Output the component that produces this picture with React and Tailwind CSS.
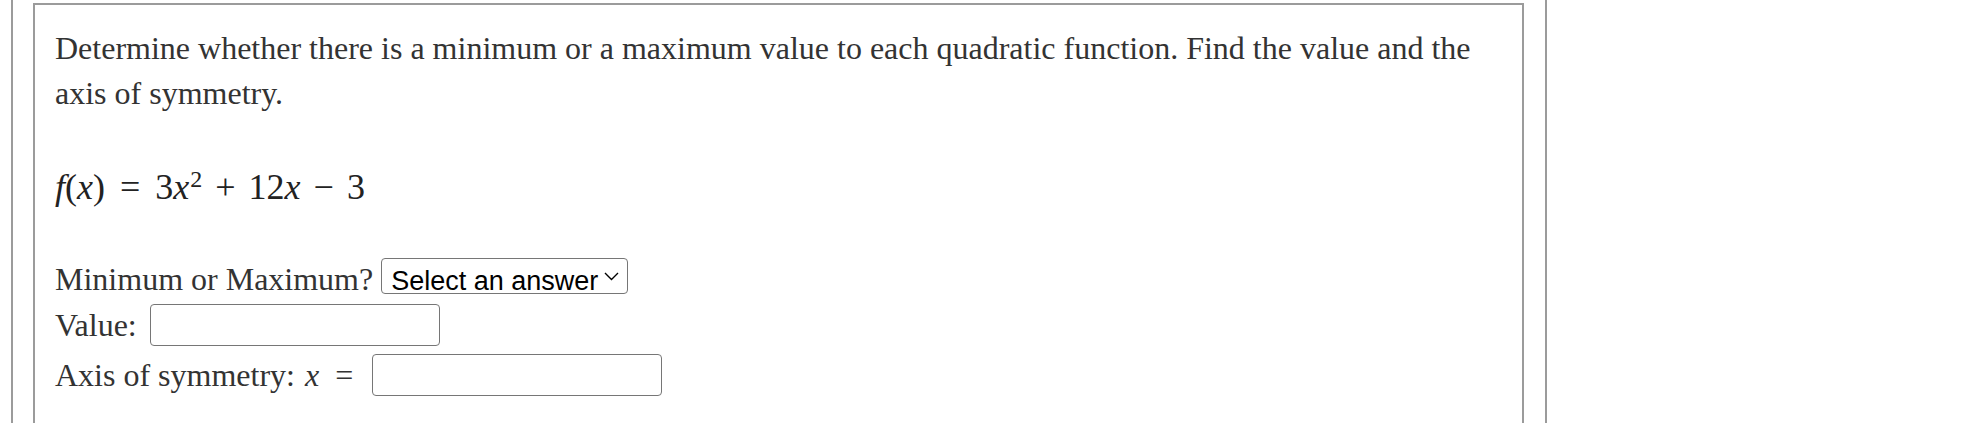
// Quadratic min/max question card, rendered like a homework player pane.

const serif = { fontFamily: '"Liberation Serif", "Times New Roman", serif' }

function MathX() {
  return <span className="italic">x</span>
}

export default function App() {
  return (
    <div className="h-[423px] overflow-hidden bg-white" style={serif}>
      <div className="ml-[11px] w-[1536px] h-full border-x-2 border-[#9b9b9b] pl-[20px] pr-[21px] pt-[3px]">
        <div className="h-[440px] border-2 border-b-0 border-[#9b9b9b] px-[20px] pt-[21px] text-[32px] leading-[45px] text-[#333]">
          <p>
            Determine whether there is a minimum or a maximum value to each quadratic function. Find the value and the
            axis of symmetry.
          </p>

          <p className="mt-[49px] text-[36px] whitespace-nowrap text-[#222]">
            <span className="italic">f</span>(<MathX />)
            <span className="mx-[15px]">=</span>3<MathX />
            <sup className="text-[24px] ml-[1px]">2</sup>
            <span className="mx-[13px]">+</span>12<MathX />
            <span className="mx-[13px]">−</span>3
          </p>

          <div className="mt-[51px] flex flex-col gap-[7px]">
            <div className="flex items-center h-[36px]">
              <span>Minimum or Maximum?</span>
              <div className="relative ml-[8px]">
                <select
                  className="appearance-none h-[36px] w-[247px] border border-[#767676] rounded-[4px] bg-white pl-[9px] text-[27px] text-black"
                  style={{ fontFamily: '"Liberation Sans", Arial, sans-serif' }}
                  defaultValue=""
                >
                  <option value="">Select an answer</option>
                  <option value="min">Minimum</option>
                  <option value="max">Maximum</option>
                </select>
                <svg
                  className="pointer-events-none absolute right-[9px] top-[15px] w-[15px] h-[9px]"
                  viewBox="0 0 15 9"
                  fill="none"
                  stroke="black"
                  strokeWidth="1.4"
                >
                  <path d="M1 1L7.5 7.5L14 1" />
                </svg>
              </div>
            </div>

            <div className="flex items-center h-[42px]">
              <span>Value:</span>
              <input type="text" className="ml-[13px] h-[42px] w-[290px] border border-[#767676] rounded-[4px] bg-white" />
            </div>

            <div className="flex items-center h-[42px] mt-[1px]">
              <span>Axis of symmetry:</span>
              <span className="ml-[10px] italic">x</span>
              <span className="ml-[16px]">=</span>
              <input type="text" className="ml-[19px] h-[42px] w-[290px] border border-[#767676] rounded-[4px] bg-white" />
            </div>
          </div>
        </div>
      </div>
    </div>
  )
}
